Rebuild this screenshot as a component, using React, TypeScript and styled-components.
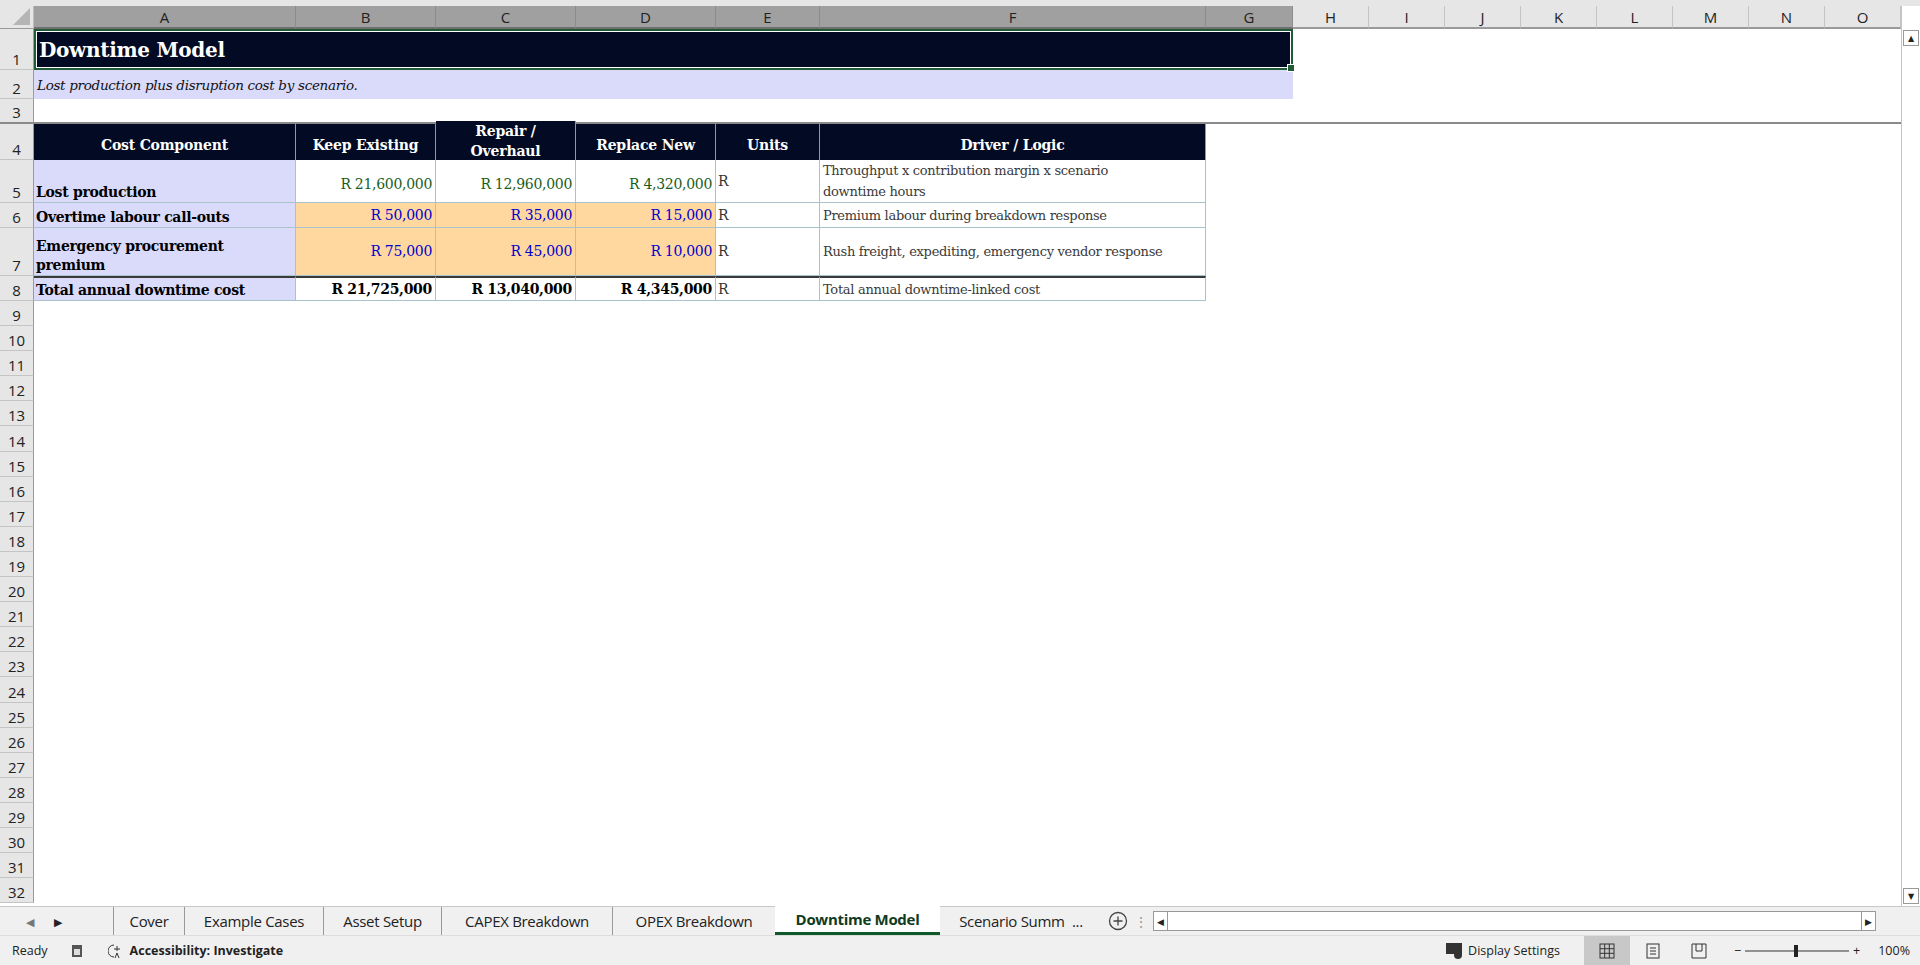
import React from "react";
import styled, { createGlobalStyle, css } from "styled-components";

const Global = createGlobalStyle`
  html, body { margin: 0; padding: 0; background: #fff; overflow: hidden; }
  * { box-sizing: border-box; }
`;

const COLS = [262, 140, 140, 140, 104, 386, 87, 76, 76, 76, 76, 76, 76, 76, 76];
const LETTERS = "ABCDEFGHIJKLMNO".split("");
const ROWH: number[] = [41, 29, 25, 36, 43, 25, 48, 25, ...Array(24).fill(25.1)];

const Page = styled.div`
  width: 1920px; height: 965px; display: flex; flex-direction: column;
  font-family: "DejaVu Serif", "Liberation Serif", serif; background: #e6e6e6;
`;
const TopStrip = styled.div`height: 6px; background: #e6e6e6;`;
const Main = styled.div`flex: 1; display: flex; overflow: hidden;`;
const Sheet = styled.div`
  width: 1901px; display: grid; align-content: start; background: #fff;
  grid-template-columns: 34px ${COLS.map((c) => c + "px").join(" ")};
  grid-template-rows: 23px ${ROWH.map((h) => h + "px").join(" ")};
`;
const Corner = styled.div`
  background: #e6e6e6; border-right: 1px solid #bdbdbd; border-bottom: 1px solid #9a9a9a; position: relative;
  &::after { content: ""; position: absolute; right: 3px; bottom: 3px; border-left: 17px solid transparent; border-bottom: 17px solid #b5b5b5; }
`;
const ColHead = styled.div<{ $sel?: boolean }>`
  background: ${(p) => (p.$sel ? "#a0a0a0" : "#e6e6e6")};
  border-right: 1px solid ${(p) => (p.$sel ? "#8c8c8c" : "#c4c4c4")};
  border-bottom: 2px solid ${(p) => (p.$sel ? "#6f6f6f" : "#9a9a9a")};
  font-family: "Open Sans", "Liberation Sans", sans-serif; font-size: 15px; color: #222;
  display: flex; align-items: center; justify-content: center;
`;
const RowHead = styled.div<{ $thick?: boolean }>`
  background: #e6e6e6; border-right: 1px solid #9a9a9a;
  border-bottom: ${(p) => (p.$thick ? "2px solid #8a8a8a" : "1px solid #c4c4c4")};
  font-family: "Open Sans", "Liberation Sans", sans-serif; font-size: 15px; color: #222;
  display: flex; align-items: flex-end; justify-content: center; padding-bottom: 0;
`;
const Title = styled.div`
  grid-column: span 7; background: #020b23; color: #fff; font-weight: bold; font-size: 20px; letter-spacing: -0.3px;
  display: flex; align-items: center; padding-left: 3px;
  border: 2px solid #1f5c35; box-shadow: inset 0 0 0 1px #fff; position: relative;
  &::after { content: ""; position: absolute; right: -4px; bottom: -4px; width: 6px; height: 6px; background: #1f5c35; border: 1px solid #fff; }
`;
const Subtitle = styled.div`
  grid-column: span 7; background: #dadafb; font-style: italic; font-size: 13.5px; color: #111; letter-spacing: -0.3px;
  display: flex; align-items: center; padding-left: 3px;
`;
const Blank = styled.div<{ $span: number; $line?: boolean }>`
  grid-column: span ${(p) => p.$span};
  ${(p) => p.$line && css`border-bottom: 2px solid #8a8a8a;`}
`;
const Head = styled.div<{ $wrap?: boolean }>`
  background: #020b23; color: #fff; font-weight: bold; font-size: 14px; letter-spacing: -0.2px;
  border-right: 1px solid #8a9aaa; display: flex; align-items: center; justify-content: center;
  text-align: center; overflow: hidden; line-height: 20px; padding-top: 5px;
  ${(p) => p.$wrap && css`align-items: flex-start; padding-top: 0; margin-top: -3px;`}
`;
type Kind = "label" | "num" | "input" | "unit" | "text" | "total";
const Cell = styled.div<{ $k: Kind; $top?: boolean }>`
  font-size: 14px; line-height: 19px; display: flex; align-items: flex-end; overflow: hidden; letter-spacing: -0.3px;
  border-right: 1px solid #a9c2cc; border-bottom: 1px solid #a9c2cc;
  ${(p) => p.$top && css`border-top: 2px solid #3a3a3a;`}
  ${(p) => p.$k === "label" && css`background: #dadafb; font-weight: bold; color: #000; padding: 0 30px 0 2px;`}
  ${(p) => p.$k === "num" && css`background: #fff; color: #1a5d1a; justify-content: flex-end; align-items: center; padding-right: 3px; padding-top: 6px;`}
  ${(p) => p.$k === "input" && css`background: #ffd8a0; color: #0000d0; justify-content: flex-end; align-items: center; padding-right: 3px;`}
  ${(p) => p.$k === "total" && css`background: #fff; color: #000; font-weight: bold; justify-content: flex-end; align-items: center; padding-right: 3px;`}
  ${(p) => p.$k === "unit" && css`background: #fff; color: #333; align-items: center; padding-left: 2px;`}
  ${(p) => p.$k === "text" && css`background: #fff; color: #3a3a3a; font-size: 13px; padding: 0 40px 0 3px; align-items: center; line-height: 21px;`}
`;
const Empty = styled.div`grid-column: span 15;`;

const VScroll = styled.div`
  width: 19px; background: #fff; border-left: 1px solid #c4c4c4; display: flex; flex-direction: column; justify-content: space-between; padding: 24px 1px 2px;
`;
const Arrow = styled.div`
  height: 16px; border: 1px solid #999; display: flex; align-items: center; justify-content: center; font-size: 8px; color: #222; background: #fff;
`;

const Tabs = styled.div`
  height: 29px; background: #f0f0f0; display: flex; align-items: stretch;
  font-family: "Open Sans", "Liberation Sans", sans-serif; font-size: 15px; color: #222; border-top: 1px solid #c8c8c8;
`;
const Nav = styled.div`width: 113px; display: flex; align-items: center; gap: 20px; padding-left: 26px; color: #777; font-size: 11px;`;
const Tab = styled.div<{ $active?: boolean; $w: number; $noLeft?: boolean }>`
  width: ${(p) => p.$w}px; display: flex; align-items: center; justify-content: center; white-space: nowrap;
  border-left: ${(p) => (p.$noLeft ? "none" : "1px solid #999")}; letter-spacing: -0.3px;
  ${(p) => p.$active && css`background: #fff; color: #0f3b1e; font-weight: bold; border-bottom: 3px solid #0f5a2a; border-left: none; margin-top: -1px;`}
`;
const Plus = styled.div`width: 22px; display: flex; align-items: center; justify-content: center; margin-left: 5px;`;
const Dots = styled.div`width: 24px; display: flex; align-items: center; justify-content: center; color: #999; font-size: 14px;`;
const HScroll = styled.div`
  width: 723px; margin: 4px 0; border: 1px solid #999; background: #fff; display: flex; justify-content: space-between; align-items: center;
`;
const HBtn = styled.div<{ $right?: boolean }>`
  width: 14px; height: 100%; display:flex; align-items:center; justify-content:center; font-size: 9px;
  ${(p) => (p.$right ? "border-left: 1px solid #999;" : "border-right: 1px solid #999;")}
`;
const Status = styled.div`
  height: 30px; background: #f0f0f0; display: flex; align-items: center; border-top: 1px solid #ddd;
  font-family: "Open Sans", "Liberation Sans", sans-serif; font-size: 12.5px; color: #222;
`;
const SItem = styled.div<{ $bold?: boolean; $ml?: number; $mr?: number }>`
  display: flex; align-items: center; gap: 4px; margin-left: ${(p) => p.$ml ?? 0}px; margin-right: ${(p) => p.$mr ?? 0}px;
  font-weight: ${(p) => (p.$bold ? "bold" : "normal")};
`;
const Spacer = styled.div<{ $w?: number }>`${(p) => (p.$w ? `width: ${p.$w}px;` : "flex: 1;")}`;
const ViewBtn = styled.div<{ $on?: boolean }>`
  width: 46px; height: 30px; display: flex; align-items: center; justify-content: center; background: ${(p) => (p.$on ? "#c8c8c8" : "transparent")};
`;

const rows: { label: string; vals: string[]; kind: Kind; text: string }[] = [
  { label: "Lost production", vals: ["R 21,600,000", "R 12,960,000", "R 4,320,000"], kind: "num", text: "Throughput x contribution margin x scenario downtime hours" },
  { label: "Overtime labour call-outs", vals: ["R 50,000", "R 35,000", "R 15,000"], kind: "input", text: "Premium labour during breakdown response" },
  { label: "Emergency procurement premium", vals: ["R 75,000", "R 45,000", "R 10,000"], kind: "input", text: "Rush freight, expediting, emergency vendor response" },
  { label: "Total annual downtime cost", vals: ["R 21,725,000", "R 13,040,000", "R 4,345,000"], kind: "total", text: "Total annual downtime-linked cost" },
];

export default function App() {
  return (
    <Page>
      <Global />
      <TopStrip />
      <Main>
        <Sheet>
          <Corner />
          {LETTERS.map((l, i) => <ColHead key={l} $sel={i < 7}>{l}</ColHead>)}
          <RowHead>1</RowHead>
          <Title>Downtime Model</Title>
          <Blank $span={8} />
          <RowHead>2</RowHead>
          <Subtitle>Lost production plus disruption cost by scenario.</Subtitle>
          <Blank $span={8} />
          <RowHead $thick>3</RowHead>
          <Blank $span={15} $line />
          <RowHead>4</RowHead>
          <Head>Cost Component</Head>
          <Head>Keep Existing</Head>
          <Head $wrap>Repair /<br />Overhaul</Head>
          <Head>Replace New</Head>
          <Head>Units</Head>
          <Head>Driver / Logic</Head>
          <Blank $span={9} />
          {rows.map((r, i) => (
            <React.Fragment key={r.label}>
              <RowHead>{i + 5}</RowHead>
              <Cell $k="label" $top={i === 3}>{r.label}</Cell>
              {r.vals.map((v) => <Cell key={v} $k={r.kind} $top={i === 3}>{v}</Cell>)}
              <Cell $k="unit" $top={i === 3}>R</Cell>
              <Cell $k="text" $top={i === 3}>{r.text}</Cell>
              <Blank $span={9} />
            </React.Fragment>
          ))}
          {Array.from({ length: 24 }, (_, i) => (
            <React.Fragment key={i}>
              <RowHead>{i + 9}</RowHead>
              <Empty />
            </React.Fragment>
          ))}
        </Sheet>
        <VScroll>
          <Arrow>▲</Arrow>
          <Arrow>▼</Arrow>
        </VScroll>
      </Main>
      <Tabs>
        <Nav><span>◀</span><span style={{ color: "#222" }}>▶</span></Nav>
        <Tab $w={71}>Cover</Tab>
        <Tab $w={139}>Example Cases</Tab>
        <Tab $w={118}>Asset Setup</Tab>
        <Tab $w={171}>CAPEX Breakdown</Tab>
        <Tab $w={163}>OPEX Breakdown</Tab>
        <Tab $w={165} $active>Downtime Model</Tab>
        <Tab $w={162} $noLeft>Scenario Summ&nbsp; ...</Tab>
        <Plus>
          <svg width="20" height="20" viewBox="0 0 20 20"><circle cx="10" cy="10" r="8.5" fill="none" stroke="#444" strokeWidth="1.3" /><path d="M10 5.5v9M5.5 10h9" stroke="#444" strokeWidth="1.3" /></svg>
        </Plus>
        <Dots>⋮</Dots>
        <HScroll><HBtn>◀</HBtn><HBtn $right>▶</HBtn></HScroll>
        <Spacer $w={28} />
      </Tabs>
      <Status>
        <SItem $ml={12}>Ready</SItem>
        <SItem $ml={22}>
          <svg width="14" height="14" viewBox="0 0 14 14"><rect x="2" y="1" width="10" height="12" fill="#555" /><rect x="4" y="5" width="6" height="6" fill="#ddd" /></svg>
        </SItem>
        <SItem $ml={24} $bold>
          <svg width="18" height="16" viewBox="0 0 18 16"><path d="M6 2a6 6 0 1 0 0 12" fill="none" stroke="#333" /><path d="M9 3v5M6 6h6M7 15l2-5 2 5" stroke="#333" fill="none" /></svg>
          Accessibility: Investigate
        </SItem>
        <Spacer />
        <SItem>
          <svg width="18" height="16" viewBox="0 0 18 16"><rect x="0" y="0" width="16" height="11" fill="#333" /><circle cx="12" cy="12" r="4" fill="#333" /></svg>
          Display Settings
        </SItem>
        <Spacer $w={24} />
        <ViewBtn $on>
          <svg width="16" height="16" viewBox="0 0 16 16" fill="none" stroke="#333"><rect x="1" y="1" width="14" height="14" /><path d="M1 5.7h14M1 10.3h14M5.7 1v14M10.3 1v14" /></svg>
        </ViewBtn>
        <ViewBtn>
          <svg width="16" height="16" viewBox="0 0 16 16" fill="none" stroke="#333"><rect x="2" y="1" width="12" height="14" /><path d="M5 5h6M5 8h6M5 11h6" /></svg>
        </ViewBtn>
        <ViewBtn>
          <svg width="16" height="16" viewBox="0 0 16 16" fill="none" stroke="#333"><path d="M1 1h14v14H1zM5 1v7h6V1" /></svg>
        </ViewBtn>
        <SItem $ml={12}>
          <span>−</span>
          <svg width="104" height="14" viewBox="0 0 104 14"><path d="M0 7h104" stroke="#333" /><rect x="49" y="1" width="4" height="12" fill="#222" /></svg>
          <span>+</span>
        </SItem>
        <SItem $ml={18} $mr={10}>100%</SItem>
      </Status>
    </Page>
  );
}
